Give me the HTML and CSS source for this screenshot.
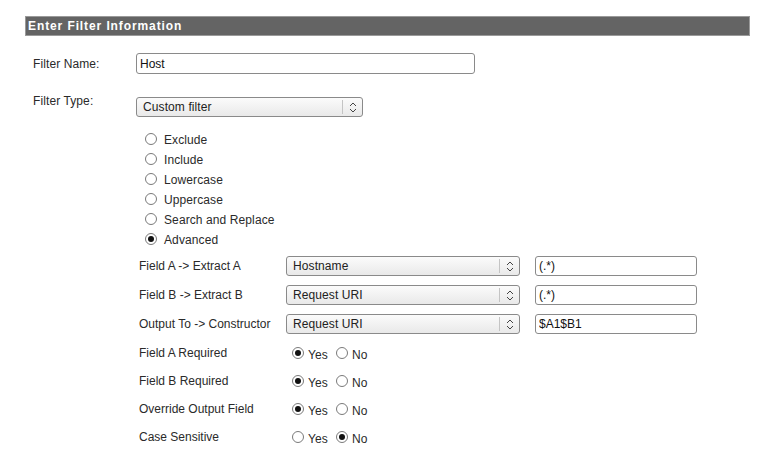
FILE: index.html
```html
<!DOCTYPE html>
<html>
<head>
<meta charset="utf-8">
<link rel="stylesheet" href="styles.css">
</head>
<body>
<div class="page">
  <div class="bar">Enter Filter Information</div>

  <div class="row name-row">
    <div class="label">Filter Name:</div>
    <input class="text name-input" type="text" value="Host">
  </div>

  <div class="row type-row">
    <div class="label">Filter Type:</div>
    <div class="select-wrap type-select">
      <select class="select"><option>Custom filter</option></select>
      <span class="arrows"><svg width="8" height="11" viewBox="0 0 8 11"><path d="M1 4 L4 1 L7 4 M1 7 L4 10 L7 7" fill="none" stroke="#444" stroke-width="1"/></svg></span>
    </div>
  </div>

  <div class="radio-list">
    <label class="radio-line"><input class="radio" type="radio" name="t">Exclude</label>
    <label class="radio-line"><input class="radio" type="radio" name="t">Include</label>
    <label class="radio-line"><input class="radio" type="radio" name="t">Lowercase</label>
    <label class="radio-line"><input class="radio" type="radio" name="t">Uppercase</label>
    <label class="radio-line"><input class="radio" type="radio" name="t">Search and Replace</label>
    <label class="radio-line"><input class="radio" type="radio" name="t" checked>Advanced</label>
  </div>

  <div class="adv">
    <div class="adv-row">
      <div class="adv-label">Field A -&gt; Extract A</div>
      <div class="select-wrap adv-select">
        <select class="select"><option>Hostname</option></select>
        <span class="arrows"><svg width="8" height="11" viewBox="0 0 8 11"><path d="M1 4 L4 1 L7 4 M1 7 L4 10 L7 7" fill="none" stroke="#444" stroke-width="1"/></svg></span>
      </div>
      <input class="text adv-input" type="text" value="(.*)">
    </div>
    <div class="adv-row">
      <div class="adv-label">Field B -&gt; Extract B</div>
      <div class="select-wrap adv-select">
        <select class="select"><option>Request URI</option></select>
        <span class="arrows"><svg width="8" height="11" viewBox="0 0 8 11"><path d="M1 4 L4 1 L7 4 M1 7 L4 10 L7 7" fill="none" stroke="#444" stroke-width="1"/></svg></span>
      </div>
      <input class="text adv-input" type="text" value="(.*)">
    </div>
    <div class="adv-row">
      <div class="adv-label">Output To -&gt; Constructor</div>
      <div class="select-wrap adv-select">
        <select class="select"><option>Request URI</option></select>
        <span class="arrows"><svg width="8" height="11" viewBox="0 0 8 11"><path d="M1 4 L4 1 L7 4 M1 7 L4 10 L7 7" fill="none" stroke="#444" stroke-width="1"/></svg></span>
      </div>
      <input class="text adv-input" type="text" value="$A1$B1">
    </div>
  </div>

  <div class="opts">
    <div class="opt-row">
      <div class="adv-label">Field A Required</div>
      <label class="yn"><input class="radio" type="radio" name="a" checked><span>Yes</span></label>
      <label class="yn"><input class="radio" type="radio" name="a"><span>No</span></label>
    </div>
    <div class="opt-row">
      <div class="adv-label">Field B Required</div>
      <label class="yn"><input class="radio" type="radio" name="b" checked><span>Yes</span></label>
      <label class="yn"><input class="radio" type="radio" name="b"><span>No</span></label>
    </div>
    <div class="opt-row">
      <div class="adv-label">Override Output Field</div>
      <label class="yn"><input class="radio" type="radio" name="c" checked><span>Yes</span></label>
      <label class="yn"><input class="radio" type="radio" name="c"><span>No</span></label>
    </div>
    <div class="opt-row">
      <div class="adv-label">Case Sensitive</div>
      <label class="yn"><input class="radio" type="radio" name="d"><span>Yes</span></label>
      <label class="yn"><input class="radio" type="radio" name="d" checked><span>No</span></label>
    </div>
  </div>
</div>
</body>
</html>
```

FILE: styles.css
```css
html, body {
  margin: 0;
  background: #fff;
}
body {
  font-family: "Liberation Sans", Arial, sans-serif;
  font-size: 12px;
  color: #2a2a2a;
}
.page {
  padding: 16px 0 0 25px;
}
.bar {
  width: 725px;
  height: 20px;
  box-sizing: border-box;
  background: #646464;
  border: 1px solid #9a9a9a;
  color: #fff;
  font-weight: bold;
  font-size: 12px;
  letter-spacing: 0.9px;
  line-height: 18px;
  padding-left: 2px;
}
.row {
  display: flex;
  padding-left: 8px;
}
.label {
  width: 103px;
  letter-spacing: 0.1px;
}
.name-row {
  margin-top: 17px;
  align-items: center;
}
.type-row {
  margin-top: 22px;
  align-items: flex-start;
}
.type-row .label {
  margin-top: -2px;
}
.text {
  box-sizing: border-box;
  margin: 0;
  border: 1px solid #8a8a8a;
  border-radius: 3px;
  background: #fff;
  font-family: "Liberation Sans", Arial, sans-serif;
  font-size: 12px;
  color: #111;
  padding: 0 3px;
  outline: none;
}
.name-input {
  width: 339px;
  height: 21px;
}
.select-wrap {
  position: relative;
  height: 20px;
}
.select {
  appearance: none;
  -webkit-appearance: none;
  box-sizing: border-box;
  width: 100%;
  height: 20px;
  margin: 0;
  border: 1px solid #8a8a8a;
  border-radius: 3px;
  background: linear-gradient(#fbfbfb, #e9e9e9);
  font-family: "Liberation Sans", Arial, sans-serif;
  font-size: 12px;
  color: #222;
  padding: 0 6px;
  letter-spacing: 0.1px;
  outline: none;
}
.arrows {
  position: absolute;
  top: 3px;
  right: 1px;
  width: 19px;
  height: 14px;
  border-left: 1px solid #c4c4c4;
  display: flex;
  align-items: center;
  justify-content: center;
}
.type-select {
  width: 227px;
  margin-top: 1px;
}
.radio-list {
  margin-top: 13px;
  padding-left: 120px;
  display: flex;
  flex-direction: column;
}
.radio-line {
  height: 20px;
  display: flex;
  align-items: center;
  letter-spacing: 0.1px;
}
.radio {
  appearance: none;
  -webkit-appearance: none;
  box-sizing: border-box;
  width: 12px;
  height: 12px;
  margin: 0;
  border: 1px solid #7a7a7a;
  border-radius: 50%;
  background: #fff;
  position: relative;
  flex: none;
}
.radio:checked::after {
  content: "";
  position: absolute;
  left: 2px;
  top: 2px;
  width: 6px;
  height: 6px;
  border-radius: 50%;
  background: #111;
}
.radio-line .radio {
  margin-right: 7px;
  margin-top: -3px;
}
.adv {
  margin-top: 6px;
  padding-left: 114px;
  display: flex;
  flex-direction: column;
  gap: 9px;
}
.adv-row {
  display: flex;
  align-items: center;
  height: 20px;
}
.adv-label {
  width: 147px;
}
.adv-select {
  width: 234px;
}
.adv-input {
  width: 162px;
  height: 20px;
  margin-left: 15px;
}
.opts {
  margin-top: 12px;
  padding-left: 114px;
}
.opt-row {
  display: flex;
  align-items: flex-start;
  height: 28px;
}
.opt-row .adv-label {
  width: 153px;
}
.yn {
  display: flex;
  align-items: flex-start;
  margin-right: 8px;
  letter-spacing: 0.1px;
}
.yn .radio {
  margin-top: 1px;
  margin-right: 4px;
}
.yn span {
  padding-top: 2px;
}
```
